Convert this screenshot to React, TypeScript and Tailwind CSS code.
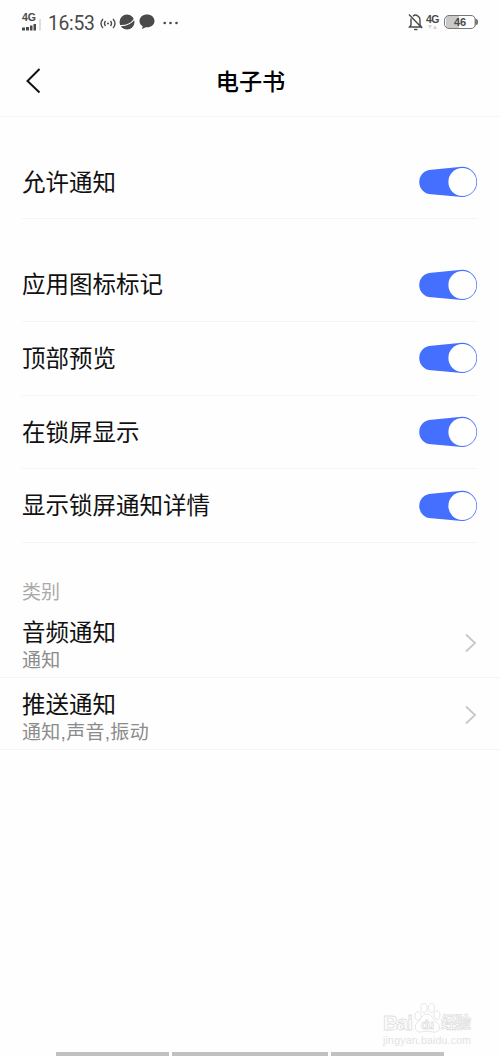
import React, { useState } from 'react';

interface SwitchProps {
  label: string;
  checked: boolean;
  onChange: () => void;
}

const Switch: React.FC<SwitchProps> = ({ label, checked, onChange }) => (
  <button type="button" role="switch" aria-label={label} aria-checked={checked} onClick={onChange}>
    <svg width="59" height="32" viewBox="0 0 59 32" className={checked ? 'block' : 'block -scale-x-100 grayscale'}>
      <path d="M12.4 3.8 L43 .8 A15.1 15.1 0 1 1 43 31 L12.4 28.2 A12.2 12.2 0 0 1 12.4 3.8Z" fill="#456fff" />
      <circle cx="43.4" cy="16" r="14" fill="#fff" />
    </svg>
  </button>
);

const SettingRow: React.FC<{ label: string }> = ({ label }) => {
  const [checked, setChecked] = useState(true);
  return (
    <div className="mx-[22px] flex h-[73.7px] items-center justify-between border-b border-[#f5f5f5]">
      <span className="pt-[3px] text-[23.5px] leading-none text-[#111]">{label}</span>
      <Switch label={label} checked={checked} onChange={() => setChecked(!checked)} />
    </div>
  );
};

interface CategoryRowProps {
  title: string;
  detail: string;
}

const CategoryRow: React.FC<CategoryRowProps> = ({ title, detail }) => (
  <div className="flex h-[72px] items-center justify-between border-b border-[#f5f5f5] pt-[3px] pr-[23px] pl-[22px]">
    <div className="flex flex-col pt-[7px]">
      <span className="text-[23.5px] leading-[28px] text-[#111]">{title}</span>
      <span className="text-[19px] leading-[27px] tracking-[0.3px] text-[#8b8b8b]">{detail}</span>
    </div>
    <svg width="12" height="20" viewBox="0 0 12 20" fill="none" stroke="#c8c8c8" strokeWidth="1.8">
      <path d="M1 1.5 L10 10 L1 18.5" />
    </svg>
  </div>
);

const StatusBar = () => (
  <div className="flex h-[44px] items-center justify-between pr-[16px] pl-[22px] text-[#4a4a4a]">
    <div className="flex items-center">
      <div className="flex w-[20px] flex-col">
        <span className="text-[10.5px] leading-[10px] font-bold">4G</span>
        <svg className="overflow-visible" width="20" height="10" viewBox="0 0 20 10" fill="currentColor">
          <path d="M0 5.5h3v3H0zM4 5h3v3.500H4zM8 3.500h2.500v5H8zM11.500 2H14v6.500h-2.500z" />
          <path d="M17 -3H19V8.500H17z" fill="#dedede" />
        </svg>
      </div>
      <span className="mt-[3px] ml-[6px] w-[47px] font-['Roboto'] text-[19.3px] leading-none tracking-[-0.3px] whitespace-nowrap">16:53</span>
      <svg className="mt-[2px] ml-[5px]" width="16" height="14" viewBox="0 0 16 14" fill="none" stroke="currentColor" strokeWidth="1.4">
        <path d="M3 3 Q-1 7.500 3 12M5.500 5Q3.500 7.500 5.500 10M13 3Q17 7.500 13 12M10.500 5Q12.500 7.500 10.500 10" />
        <circle cx="8" cy="7.500" r="1" fill="currentColor" stroke="none" />
      </svg>
      <svg className="ml-[3px]" width="16" height="16" viewBox="0 0 16 16">
        <circle cx="8" cy="8" r="7.500" fill="currentColor" />
        <path d="M0 11.500C6 12 12 10 15.500 5" fill="none" stroke="#fff" strokeWidth="1.200" />
      </svg>
      <svg className="ml-[4px]" width="16" height="16" viewBox="0 0 16 16" fill="currentColor">
        <path d="M8 .5C3.800.5.500 3.200.500 7c0 2.300 1.200 4.200 3.200 5.300L3 15l3.800-1.800c5 .5 8.700-2.200 8.700-6.200C15.500 3.200 12.200.5 8 .5z" />
      </svg>
      <svg className="mt-[2px] ml-[8px]" width="16" height="4" viewBox="0 0 16 4" fill="currentColor">
        <circle cx="1.700" cy="2" r="1.300" />
        <circle cx="7.500" cy="2" r="1.300" />
        <circle cx="13.500" cy="2" r="1.300" />
      </svg>
    </div>
    <div className="flex items-center pr-[6px]">
      <svg width="15" height="18" viewBox="0 0 15 18" fill="none" stroke="currentColor" strokeWidth="1.400">
        <path d="M5 3.200Q7.500.8 10 3.200Q12 4.500 12 7V12L13.500 14H1.500L3 12V5.500M1 1.500L14 15" />
        <path d="M6 16.500H9.500" />
      </svg>
      <div className="ml-[3px] flex w-[14px] flex-col">
        <span className="text-[10.5px] leading-[10px] font-bold tracking-[-0.5px]">4G</span>
        <svg width="14" height="6" viewBox="0 0 14 6" fill="#d6d6d6">
          <path d="M2 1h4L4 5zM7 5h4L9 1z" />
        </svg>
      </div>
      <div className="ml-[4px] flex items-center">
        <div className="flex h-[14px] w-[32px] items-center justify-center rounded-[5px] border border-[#777] bg-linear-to-r from-[#c9c9c9] from-46% to-white to-46% bg-origin-content p-px text-[11px] leading-none font-bold">
          46
        </div>
        <div className="h-[6px] w-[2px] rounded-r-sm bg-[#777]" />
      </div>
    </div>
  </div>
);

const Watermark = () => (
  <svg className="absolute right-[26px] bottom-[8px]" width="94" height="48" viewBox="0 0 94 48" fill="#fff" stroke="#e0e0e0" strokeWidth=".8">
    <text x="3" y="30" fontSize="21" fontWeight="bold" textLength="30">Bai</text>
    <ellipse cx="38" cy="16" rx="3" ry="4.200" />
    <ellipse cx="44" cy="8" rx="3" ry="4.500" />
    <ellipse cx="51.500" cy="8" rx="3" ry="4.500" />
    <ellipse cx="57" cy="15" rx="3" ry="4.200" />
    <path d="M47 14C42 14 41 20 37 23C33 27 36 33 41 32C45 31 49 31 53 32C59 33 62 27 57 23C53 20 52 14 47 14Z" />
    <text x="41" y="29" fontSize="12" fontWeight="bold" textLength="13">du</text>
    <text x="61" y="28" fontSize="15.500" fontWeight="bold" textLength="30">经验</text>
    <text x="3" y="43.500" fontSize="10.500" fill="#e2e2e2" stroke="none" textLength="88">jingyan.baidu.com</text>
  </svg>
);

export default function App() {
  return (
    <div className="relative flex h-[1056px] w-[500px] flex-col overflow-hidden bg-[#fefefe] font-['Liberation_Sans','Noto_Sans_CJK_SC',sans-serif]">
      <StatusBar />
      <header className="flex h-[73px] items-center border-b border-[#f5f5f5] px-[24px]">
        <button type="button" aria-label="返回" className="w-[40px]">
          <svg width="18" height="26" viewBox="0 0 18 26" fill="none" stroke="#111" strokeWidth="2">
            <path d="M15.500 2L3.500 14L15.500 25.500" />
          </svg>
        </button>
        <h1 className="flex-1 pt-[5px] pr-[39px] text-center text-[23.2px] leading-none font-medium text-black">电子书</h1>
      </header>

      <section className="mt-[28.5px]">
        <SettingRow label="允许通知" />
      </section>
      <section className="mt-[29px]">
        <SettingRow label="应用图标标记" />
        <SettingRow label="顶部预览" />
        <SettingRow label="在锁屏显示" />
        <SettingRow label="显示锁屏通知详情" />
      </section>

      <section className="mt-[36px]">
        <h2 className="h-[27px] pl-[22px] text-[19px] leading-[28px] text-[#aaa]">类别</h2>
        <CategoryRow title="音频通知" detail="通知" />
        <CategoryRow title="推送通知" detail="通知,声音,振动" />
      </section>

      <nav className="mt-auto flex h-[4px] gap-[3px] px-[56px]">
        <div className="w-[113px] bg-[#c1c1c1]" />
        <div className="flex-1 bg-[#c1c1c1]" />
        <div className="w-[113px] bg-[#c1c1c1]" />
      </nav>
      <Watermark />
    </div>
  );
}
